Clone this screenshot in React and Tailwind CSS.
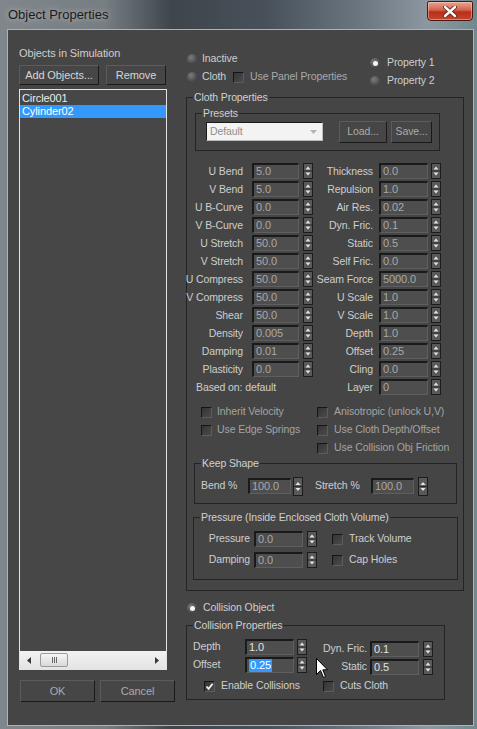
import React from 'react';
import clsx from 'clsx';

const LEFT = [
  ['U Bend', '5.0'], ['V Bend', '5.0'], ['U B-Curve', '0.0'], ['V B-Curve', '0.0'],
  ['U Stretch', '50.0'], ['V Stretch', '50.0'], ['U Compress', '50.0'], ['V Compress', '50.0'],
  ['Shear', '50.0'], ['Density', '0.005'], ['Damping', '0.01'], ['Plasticity', '0.0'],
];

const RIGHT = [
  ['Thickness', '0.0'], ['Repulsion', '1.0'], ['Air Res.', '0.02'], ['Dyn. Fric.', '0.1'],
  ['Static', '0.5'], ['Self Fric.', '0.0'], ['Seam Force', '5000.0'], ['U Scale', '1.0'],
  ['V Scale', '1.0'], ['Depth', '1.0'], ['Offset', '0.25'], ['Cling', '0.0'], ['Layer', '0'],
];

function Spinner({ tall }) {
  const h = tall ? 19 : 16;
  const m = h / 2;
  return (
    <svg width="10" height={h} viewBox={`0 0 10 ${h}`} className="block shrink-0">
      <rect x="0" y="0" width="10" height={h} fill="#1c1c1c" />
      <rect x="1" y="1" width="8" height={h - 2} fill="#595959" />
      <line x1="1" x2="9" y1={m} y2={m} stroke="#2c2c2c" strokeWidth="1" />
      <polygon points={`2.5,${m - 1.5} 7.5,${m - 1.5} 5,${m - 4.5}`} fill="#e4e4e4" />
      <polygon points={`2.5,${m + 1.5} 7.5,${m + 1.5} 5,${m + 4.5}`} fill="#e4e4e4" />
    </svg>
  );
}

function Field({ value, className, tone = 'text-[#a8a8a8]', selected }) {
  return (
    <div
      className={clsx(
        'h-[16px] shrink-0 bg-[#4e4e4e] border-t-2 border-l-2 border-t-[#1a1a1a] border-l-[#1a1a1a] border-b border-r border-b-[#5f5f5f] border-r-[#5f5f5f] pl-[2px] flex items-center text-[11px] leading-none',
        className,
        tone
      )}
    >
      {selected ? <span className="bg-[#3399ff] text-white px-[1px] py-[1px]">{value}</span> : value}
    </div>
  );
}

function Check({ on }) {
  return (
    <span className="w-[11px] h-[11px] shrink-0 flex items-center justify-center bg-[linear-gradient(135deg,#353535,#4a4a4a)] border-t border-l border-t-[#161616] border-l-[#161616] border-b border-r border-b-[#5c5c5c] border-r-[#5c5c5c]">
      {on && (
        <svg width="9" height="9" viewBox="0 0 9 9">
          <path d="M1.5 4.5 L3.6 6.8 L7.6 1.8" fill="none" stroke="#f2f2f2" strokeWidth="1.8" />
        </svg>
      )}
    </span>
  );
}

function Radio({ on }) {
  return (
    <span className="w-[10px] h-[10px] rounded-full shrink-0 flex items-center justify-center bg-[radial-gradient(circle_at_40%_35%,#7c7c7c,#4c4c4c_65%,#2c2c2c)]">
      {on && <span className="w-[5px] h-[5px] rounded-full bg-[#f6f6f6]" />}
    </span>
  );
}

function Btn({ className, dim, children }) {
  return (
    <div
      className={clsx(
        'flex items-center justify-center bg-[#464646] border border-t-[#5c5c5c] border-l-[#5c5c5c] border-b-[#1a1a1a] border-r-[#1a1a1a]',
        dim ? 'text-[#ababab]' : 'text-[#d6d6d6]',
        className
      )}
    >
      {children}
    </div>
  );
}

function Group({ title, className, children }) {
  return (
    <fieldset className={clsx('border border-[#242424]', className)}>
      <legend className="ml-[6px] px-[1px] leading-[14px] text-[#d0d0d0]">{title}</legend>
      {children}
    </fieldset>
  );
}

function ClothRow({ l, r }) {
  return (
    <div className="h-[18px] flex items-center">
      {l ? (
        <>
          <div className="w-[56px] flex justify-end whitespace-nowrap pt-[1px]">{l[0]}</div>
          <Field className="w-[47px] ml-[9px]" value={l[1]} />
          <div className="ml-[4px]"><Spinner /></div>
        </>
      ) : (
        <div className="w-[126px] pl-[9px] whitespace-nowrap pt-[1px]">Based on: default</div>
      )}
      <div className="w-[60px] flex justify-end whitespace-nowrap pt-[1px]">{r[0]}</div>
      <Field className="w-[49px] ml-[6px]" value={r[1]} />
      <div className="ml-[3px]"><Spinner /></div>
    </div>
  );
}

function Cursor() {
  return (
    <svg width="13" height="21" viewBox="0 0 13 21" className="absolute left-[316px] top-[658px]">
      <path d="M0.5 0.5 L0.5 16.5 L4.5 12.5 L7.5 19.5 L9.5 18.5 L6.8 11.8 L11.5 11.8 Z" fill="#fff" stroke="#000" strokeWidth="1" />
    </svg>
  );
}

export default function App() {
  return (
    <div className="relative w-[477px] h-[729px] overflow-hidden font-['Liberation_Sans',Arial,sans-serif] text-[10.5px] tracking-[-0.1px] text-[#cecece] bg-[linear-gradient(90deg,#80878c_0%,#767d83_22%,#3e454b_36%,#48515a_56%,#6c7781_76%,#8d98a1_90%,#6f8a8e_100%)]">
      {/* title bar */}
      <div className="h-[29px] flex items-start">
        <div className="pl-[8px] pt-[7px] text-[13px] tracking-normal leading-[16px] text-[#1b1b1b] [text-shadow:0_0_6px_rgba(255,255,255,0.55)]">
          Object Properties
        </div>
        <div className="ml-auto mr-[4px] mt-[1px] w-[46px] h-[20px] rounded-b-[4px] rounded-t-[2px] border border-[#4a1a12] bg-[linear-gradient(180deg,#e9a493_0%,#d2634c_45%,#b8301a_55%,#c4452c_100%)] shadow-[inset_0_0_0_1px_rgba(255,220,210,0.45)] flex items-center justify-center">
          <svg width="14" height="11" viewBox="0 0 14 11">
            <path d="M2 1 L12 10 M12 1 L2 10" stroke="#5a1a10" strokeWidth="4" strokeLinecap="round" />
            <path d="M2 1 L12 10 M12 1 L2 10" stroke="#ffffff" strokeWidth="2.4" strokeLinecap="round" />
          </svg>
        </div>
      </div>

      {/* client area */}
      <div className="ml-[7px] w-[467px] h-[697px] border border-[#a9b3b9] bg-[#454545] flex">
        {/* left column */}
        <div className="ml-[11px] w-[156px] flex flex-col">
          <div className="mt-[16px] leading-[14px] text-[11px]">Objects in Simulation</div>
          <div className="mt-[5px] flex text-[11px]">
            <Btn className="w-[80px] h-[20px]">Add Objects...</Btn>
            <Btn className="w-[60px] h-[20px] ml-[7px]">Remove</Btn>
          </div>
          <div className="mt-[4px] w-[148px] h-[581px] border border-[#e4e4e4] bg-[#474747] flex flex-col">
            <div className="flex-1 pt-[2px] text-[11px] text-[#ececec]">
              <div className="h-[13px] leading-[13px] pl-[2px]">Circle001</div>
              <div className="h-[13px] leading-[13px] pl-[2px] bg-[#3399ff] text-white">Cylinder02</div>
            </div>
            <div className="h-[18px] bg-[linear-gradient(180deg,#f2f2f2,#e4e4e4)] flex items-center">
              <div className="w-[18px] flex justify-center">
                <svg width="4" height="7" viewBox="0 0 4 7"><polygon points="4,0 4,7 0,3.5" fill="#3a3a3a" /></svg>
              </div>
              <div className="ml-[2px] w-[28px] h-[14px] rounded-[2px] border border-[#9b9b9b] bg-[linear-gradient(180deg,#f6f6f6,#d9d9d9)] flex items-center justify-center gap-[1px]">
                <span className="w-[1px] h-[6px] bg-[#6a6a6a]" />
                <span className="w-[1px] h-[6px] bg-[#6a6a6a]" />
                <span className="w-[1px] h-[6px] bg-[#6a6a6a]" />
              </div>
              <div className="ml-auto w-[18px] flex justify-center">
                <svg width="4" height="7" viewBox="0 0 4 7"><polygon points="0,0 0,7 4,3.5" fill="#3a3a3a" /></svg>
              </div>
            </div>
          </div>
          <div className="mt-[10px] flex text-[11px]">
            <Btn className="ml-[1px] w-[75px] h-[22px]" dim>OK</Btn>
            <Btn className="ml-[5px] w-[75px] h-[22px]" dim>Cancel</Btn>
          </div>
        </div>

        {/* right column */}
        <div className="ml-[11px] w-[278px] flex flex-col">
          <div className="h-[60px] flex">
            <div className="w-[184px] pt-[20px]">
              <div className="h-[18px] flex items-center pl-[1px]">
                <Radio />
                <span className="ml-[5px]">Inactive</span>
              </div>
              <div className="h-[18px] flex items-center pl-[1px]">
                <Radio />
                <span className="ml-[5px]">Cloth</span>
                <span className="ml-[7px]"><Check /></span>
                <span className="ml-[6px] text-[#a9a9a9] whitespace-nowrap">Use Panel Properties</span>
              </div>
            </div>
            <div className="pt-[24px]">
              <div className="h-[18px] flex items-center">
                <Radio on />
                <span className="ml-[7px] whitespace-nowrap">Property 1</span>
              </div>
              <div className="h-[18px] flex items-center">
                <Radio />
                <span className="ml-[7px] whitespace-nowrap">Property 2</span>
              </div>
            </div>
          </div>

          <Group title="Cloth Properties" className="w-[278px] pb-[10px]">
            <Group title="Presets" className="ml-[8px] mt-[2px] w-[245px] pb-[7px]">
              <div className="h-[23px] flex items-center pl-[10px]">
                <div className="w-[117px] h-[19px] bg-[#f3f3f3] border-t border-l border-t-[#1a1a1a] border-l-[#1a1a1a] border-b border-r border-b-[#bdbdbd] border-r-[#bdbdbd] flex items-center pl-[3px] text-[#8e8e8e]">
                  Default
                  <svg width="7" height="4" viewBox="0 0 7 4" className="ml-auto mr-[5px]"><polygon points="0,0 7,0 3.5,4" fill="#b4b4b4" /></svg>
                </div>
                <Btn className="ml-[16px] w-[48px] h-[22px]" dim>Load...</Btn>
                <Btn className="ml-[4px] w-[41px] h-[22px]" dim>Save...</Btn>
              </div>
            </Group>

            <div className="mt-[11px]">
              {RIGHT.map((r, i) => (
                <ClothRow key={r[0]} l={LEFT[i]} r={r} />
              ))}
            </div>

            <div className="mt-[7px] text-[#a3a3a3]">
              <div className="h-[18px] flex items-center">
                <div className="w-[116px] ml-[14px] flex items-center">
                  <Check />
                  <span className="ml-[5px] whitespace-nowrap">Inherit Velocity</span>
                </div>
                <Check />
                <span className="ml-[6px] whitespace-nowrap">Anisotropic (unlock U,V)</span>
              </div>
              <div className="h-[18px] flex items-center">
                <div className="w-[116px] ml-[14px] flex items-center">
                  <Check />
                  <span className="ml-[5px] whitespace-nowrap">Use Edge Springs</span>
                </div>
                <Check />
                <span className="ml-[6px] whitespace-nowrap">Use Cloth Depth/Offset</span>
              </div>
              <div className="h-[18px] flex items-center">
                <div className="w-[116px] ml-[14px]" />
                <Check />
                <span className="ml-[6px] whitespace-nowrap">Use Collision Obj Friction</span>
              </div>
            </div>

            <Group title="Keep Shape" className="ml-[7px] mt-[-1px] w-[263px] pt-[6px] pb-[7px]">
              <div className="h-[20px] flex items-center">
                <span className="ml-[6px] w-[47px] whitespace-nowrap">Bend %</span>
                <Field className="w-[43px]" value="100.0" />
                <div className="ml-[2px]"><Spinner tall /></div>
                <span className="ml-[12px] w-[56px] whitespace-nowrap">Stretch %</span>
                <Field className="w-[43px]" value="100.0" />
                <div className="ml-[4px]"><Spinner tall /></div>
              </div>
            </Group>

            <Group title="Pressure (Inside Enclosed Cloth Volume)" className="ml-[6px] mt-[6px] w-[265px] pt-[6px] pb-[10px]">
              <div className="h-[18px] flex items-center">
                <div className="w-[56px] flex justify-end whitespace-nowrap">Pressure</div>
                <Field className="w-[49px] ml-[4px]" value="0.0" />
                <div className="ml-[4px]"><Spinner /></div>
                <span className="ml-[15px]"><Check /></span>
                <span className="ml-[6px] whitespace-nowrap">Track Volume</span>
              </div>
              <div className="mt-[3px] h-[18px] flex items-center">
                <div className="w-[56px] flex justify-end whitespace-nowrap">Damping</div>
                <Field className="w-[49px] ml-[4px]" value="0.0" />
                <div className="ml-[4px]"><Spinner /></div>
                <span className="ml-[15px]"><Check /></span>
                <span className="ml-[6px] whitespace-nowrap">Cap Holes</span>
              </div>
            </Group>
          </Group>

          <div className="mt-[8px] h-[18px] flex items-center pl-[1px]">
            <Radio on />
            <span className="ml-[6px]">Collision Object</span>
          </div>

          <Group title="Collision Properties" className="mt-[1px] w-[259px] pt-[6px] pb-[4px]">
            <div className="flex">
              <div>
                <div className="h-[18px] flex items-center">
                  <span className="ml-[6px] w-[52px]">Depth</span>
                  <Field className="w-[49px]" tone="text-[#e2e2e2]" value="1.0" />
                  <div className="ml-[3px]"><Spinner /></div>
                </div>
                <div className="h-[18px] flex items-center">
                  <span className="ml-[6px] w-[52px]">Offset</span>
                  <Field className="w-[49px]" tone="text-[#e2e2e2]" value="0.25" selected />
                  <div className="ml-[3px]"><Spinner /></div>
                </div>
              </div>
              <div className="mt-[2px]">
                <div className="h-[18px] flex items-center">
                  <div className="w-[60px] flex justify-end whitespace-nowrap">Dyn. Fric.</div>
                  <Field className="w-[49px] ml-[3px]" tone="text-[#e2e2e2]" value="0.1" />
                  <div className="ml-[4px]"><Spinner /></div>
                </div>
                <div className="h-[18px] flex items-center">
                  <div className="w-[60px] flex justify-end whitespace-nowrap">Static</div>
                  <Field className="w-[49px] ml-[3px]" tone="text-[#e2e2e2]" value="0.5" />
                  <div className="ml-[4px]"><Spinner /></div>
                </div>
              </div>
            </div>
            <div className="mt-[1px] h-[18px] flex items-center">
              <div className="ml-[17px] w-[119px] flex items-center">
                <Check on />
                <span className="ml-[6px] whitespace-nowrap">Enable Collisions</span>
              </div>
              <Check />
              <span className="ml-[6px] whitespace-nowrap">Cuts Cloth</span>
            </div>
          </Group>
        </div>
      </div>

      <Cursor />
    </div>
  );
}
